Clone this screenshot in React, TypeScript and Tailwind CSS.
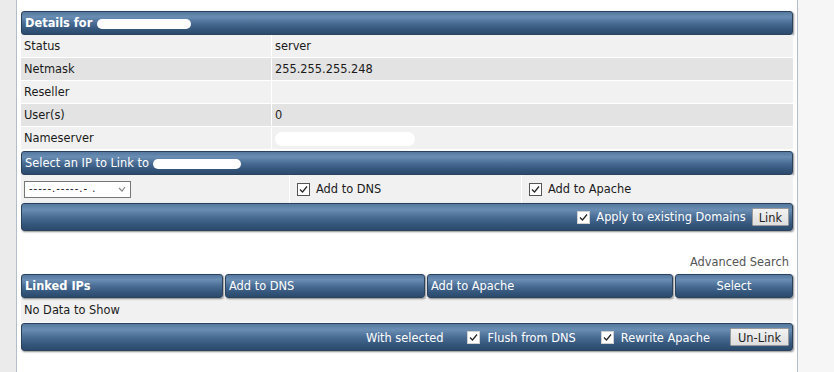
import React from "react";

const bar =
  "rounded-[3px] border border-[#2b425c] bg-[linear-gradient(to_bottom,#54789f_0%,#6a8db3_22%,#4a6d95_50%,#34557a_80%,#2b4a6c_100%)] shadow-[1px_1px_2px_rgba(0,0,0,0.45)] text-white";

function Check({ light }: { light?: boolean }) {
  return (
    <span
      className={`inline-flex h-[13px] w-[13px] shrink-0 items-center justify-center border bg-white ${
        light ? "border-[#d0d0d0]" : "border-[#555]"
      }`}
    >
      <svg width="9" height="9" viewBox="0 0 9 9">
        <path d="M1 4.5 L3.5 7 L8 1.5" fill="none" stroke="#222" strokeWidth="1.2" />
      </svg>
    </span>
  );
}

function Blob({ w }: { w: number }) {
  return <span className="inline-block h-[10px] rounded-full bg-white align-middle" style={{ width: w }} />;
}

const details: [string, React.ReactNode][] = [
  ["Status", "server"],
  ["Netmask", "255.255.255.248"],
  ["Reseller", ""],
  ["User(s)", "0"],
  ["Nameserver", <span className="inline-block h-[14px] w-[140px] rounded-full bg-white align-middle" />],
];

export default function App() {
  return (
    <div className="flex h-[372px] w-[834px] overflow-hidden bg-[linear-gradient(to_right,#ebebeb,#f6f6f6)] font-['DejaVu_Sans',Verdana,sans-serif] text-[11.4px] text-[#1a1a1a]">
      <div className="ml-[16px] w-[782px] border-x border-[#b4bec8] bg-white px-[4px] pt-[11px]">
        <div className={`${bar} flex h-[24px] items-center gap-[5px] px-[3px] pt-[1px] font-bold`}>
          <span>Details for</span>
          <Blob w={94} />
        </div>
        <div className="flex flex-col">
          {details.map(([label, value], i) => (
            <div
              key={label}
              className={`grid h-[23px] grid-cols-[251px_1fr] border-b border-white ${
                i % 2 === 0 ? "bg-[#f1f1f1]" : "bg-[#e3e3e3]"
              }`}
            >
              <div className="flex items-center border-r border-white pl-[3px] pt-[2px]">{label}</div>
              <div className="flex items-center pl-[3px] pt-[2px]">{value}</div>
            </div>
          ))}
        </div>

        <div className={`${bar} mt-[1px] flex h-[24px] items-center gap-[4px] px-[3px] pt-[1px]`}>
          <span>Select an IP to Link to</span>
          <Blob w={88} />
        </div>
        <div className="grid h-[28px] grid-cols-[269px_232px_1fr] bg-[#f1f1f1]">
          <div className="flex items-center border-r border-white pl-[3px]">
            <div className="flex h-[17px] w-[107px] items-center justify-between border border-[#777] bg-white px-[4px]">
              <span className="tracking-[1px] text-[10px] leading-none text-[#111]">-----.-----.- .</span>
              <svg width="8" height="6" viewBox="0 0 8 6">
                <path d="M1 2 L4 5 L7 1" fill="none" stroke="#888" strokeWidth="1.2" />
              </svg>
            </div>
          </div>
          <div className="flex items-center gap-[6px] border-r border-white pl-[7px] pt-[1px]">
            <Check />
            <span>Add to DNS</span>
          </div>
          <div className="flex items-center gap-[6px] pl-[7px] pt-[1px]">
            <Check />
            <span>Add to Apache</span>
          </div>
        </div>
        <div className={`${bar} flex h-[28px] items-center justify-end gap-[6px] pr-[3px]`}>
          <Check light />
          <span className="mt-[2px]">Apply to existing Domains</span>
          <button className="h-[18px] rounded-[1px] border border-[#9a9a9a] bg-[linear-gradient(to_bottom,#f2f2f2,#dedede)] px-[6px] pt-[1px] text-[11.4px] text-[#222]">
            Link
          </button>
        </div>

        <div className="mt-[23px] flex justify-end pr-[4px] text-[#555]">Advanced Search</div>

        <div className="mt-[3px] grid h-[24px] grid-cols-[202px_200px_246px_118px] gap-x-[2px]">
          <div className={`${bar} flex items-center px-[3px] pt-[1px] font-bold`}>Linked IPs</div>
          <div className={`${bar} flex items-center px-[3px] pt-[1px]`}>Add to DNS</div>
          <div className={`${bar} flex items-center px-[3px] pt-[1px]`}>Add to Apache</div>
          <div className={`${bar} flex items-center justify-center pt-[1px]`}>Select</div>
        </div>
        <div className="flex h-[24px] items-center bg-[#f1f1f1] pl-[3px] pt-[1px]">No Data to Show</div>
        <div className={`${bar} mt-[1px] flex h-[28px] items-center justify-end pr-[3px]`}>
          <span className="mr-[24px] mt-[2px]">With selected</span>
          <Check light />
          <span className="ml-[7px] mr-[25px] mt-[2px]">Flush from DNS</span>
          <Check light />
          <span className="ml-[7px] mr-[20px] mt-[2px]">Rewrite Apache</span>
          <button className="h-[18px] rounded-[1px] border border-[#9a9a9a] bg-[linear-gradient(to_bottom,#f2f2f2,#dedede)] px-[7px] pt-[1px] text-[11.4px] text-[#222]">
            Un-Link
          </button>
        </div>
      </div>
    </div>
  );
}
